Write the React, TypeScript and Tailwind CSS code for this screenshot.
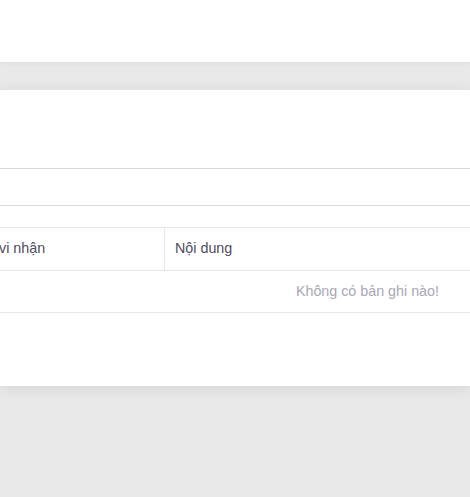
export default function App() {
  return (
    <div
      className="min-h-[497px] bg-[#e9e9e9] text-[14.3px]"
      style={{ fontFamily: '"Liberation Sans", Arial, sans-serif' }}
    >
      {/* Header */}
      <header className="relative z-10 h-[62px] bg-white shadow-[0_1px_6px_rgba(0,0,0,0.06)]"></header>

      <main className="pt-[28px]">
        <section className="relative z-10 h-[296px] bg-white shadow-[0_2px_14px_rgba(0,0,0,0.09)]">
          {/* Title area */}
          <div className="h-[79px] border-b border-[#d9d9dd]"></div>
          {/* Filter bar */}
          <div className="h-[37px] border-b border-[#d9d9dd]"></div>

          {/* Table */}
          <div className="mt-[21px] overflow-hidden">
            <div className="flex h-[44px] border-y border-[#e6e6ee] text-[#4d4d5c]">
              <div className="flex w-[165px] shrink-0 items-center border-r border-[#e6e6ee] whitespace-nowrap">
                <span className="-ml-[1px]">vi nhận</span>
              </div>
              <div className="flex flex-1 items-center pl-[10px] whitespace-nowrap">Nội dung</div>
            </div>
            <div className="flex h-[42px] items-center justify-end border-b border-[#e6e6ee] pr-[31px] text-[#a8a8b6]">
              Không có bản ghi nào!
            </div>
          </div>
        </section>
      </main>
    </div>
  );
}
